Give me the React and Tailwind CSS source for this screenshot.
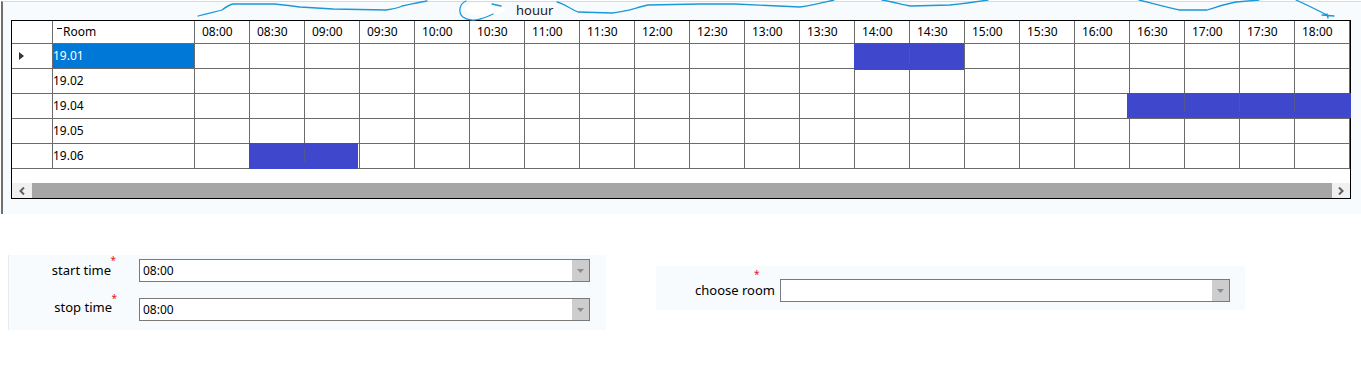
import React from "react";

const times = [
  "08:00","08:30","09:00","09:30","10:00","10:30","11:00","11:30","12:00","12:30",
  "13:00","13:30","14:00","14:30","15:00","15:30","16:00","16:30","17:00","17:30","18:00",
];
const rooms = ["19.01", "19.02", "19.04", "19.05", "19.06"];

function Combo({ value, className }) {
  return (
    <div className={"flex h-[23px] border border-[#7a7a7a] bg-white " + className}>
      <div className="flex flex-1 items-center pl-[3px] text-[12px] leading-none text-black">{value}</div>
      <div className="flex w-[17px] items-center justify-center bg-[#cdcdcd]">
        <svg width="7" height="4" viewBox="0 0 7 4">
          <polygon points="0,0 7,0 3.5,4" fill="#8c8c8c" />
        </svg>
      </div>
    </div>
  );
}

function Label({ text, starTop }) {
  return (
    <span className="relative text-[13px] leading-none text-black">
      {text}
      <span className={"absolute right-[-5px] text-[10px] leading-none text-[#e81123] " + starTop}>*</span>
    </span>
  );
}

export default function App() {
  return (
    <div className="relative h-[387px] w-[1361px] overflow-hidden bg-white font-['Noto_Sans',sans-serif]">
      {/* top panel */}
      <div className="ml-px mt-px h-[213px] border-l-2 border-t border-[#6f6f6f] border-t-[#d5dbe1] bg-[#f7fbfe] pl-[8px] pt-[18px]">
        <div className="relative w-[1340px] border border-black bg-white">
          <div className="grid grid-cols-[41px_142px_repeat(21,55px)] text-[12px] leading-none text-black">
            {/* header */}
            <div className="h-[23px] border-b border-r border-[#6b6b6b]" />
            <div className="flex h-[23px] items-center border-b border-r border-[#6b6b6b] pl-[4px]">
              <span className="mb-[7px] mr-[1px] inline-block h-px w-[5px] bg-black" />
              Room
            </div>
            {times.map((t) => (
              <div key={t} className="flex h-[23px] items-center border-b border-r border-[#6b6b6b] pl-[7px]">
                {t}
              </div>
            ))}
            {rooms.map((r, i) => (
              <React.Fragment key={r}>
                <div className="flex h-[25px] items-center border-b border-r border-[#6b6b6b] pl-[7px]">
                  {i === 0 && (
                    <svg width="5" height="8" viewBox="0 0 5 8">
                      <polygon points="0,0 5,4 0,8" fill="#333" />
                    </svg>
                  )}
                </div>
                <div
                  className={
                    "flex h-[25px] items-center border-b border-r border-[#6b6b6b] " +
                    (i === 0 ? "bg-[#0078d7] text-white" : "")
                  }
                >
                  {r}
                </div>
                {times.map((t) => (
                  <div key={t} className="h-[25px] border-b border-r border-[#6b6b6b]" />
                ))}
              </React.Fragment>
            ))}
          </div>
          {/* scrollbar */}
          <div className="mt-[14px] flex h-[15px]">
            <div className="flex w-[20px] items-center justify-center bg-[#f0f0f0]">
              <svg width="6" height="8" viewBox="0 0 6 8">
                <polyline points="5,0.5 1.5,4 5,7.5" fill="none" stroke="#606060" strokeWidth="2" />
              </svg>
            </div>
            <div className="flex-1 bg-[#a6a6a6]" />
            <div className="flex w-[18px] items-center justify-center bg-[#f0f0f0]">
              <svg width="6" height="8" viewBox="0 0 6 8">
                <polyline points="1,0.5 4.5,4 1,7.5" fill="none" stroke="#606060" strokeWidth="2" />
              </svg>
            </div>
          </div>
          {/* painted blocks */}
          <div className="absolute left-[842px] top-[22px] h-[27px] w-[110px] bg-[#3f48cc]" />
          <div className="absolute left-[897px] top-[27px] h-[16px] w-px bg-[#55558f]" />
          <div className="absolute left-[1115px] top-[72px] h-[25px] w-[224px] bg-[#3f48cc]" />
          <div className="absolute left-[1172px] top-[72px] h-[19px] w-px bg-[#55558f]" />
          <div className="absolute left-[1227px] top-[72px] h-[19px] w-px bg-[#55558f]" />
          <div className="absolute left-[1282px] top-[72px] h-[19px] w-px bg-[#55558f]" />
          <div className="absolute left-[237px] top-[122px] h-[26px] w-[109px] bg-[#3f48cc]" />
          <div className="absolute left-[292px] top-[127px] h-[14px] w-px bg-[#55558f]" />
        </div>
      </div>

      {/* forms */}
      <div className="flex items-start">
        <div className="ml-[8px] mt-[41px] h-[75px] w-[598px] border-l border-[#e6ebf0] bg-[#f7fbfe]">
          <div className="mt-[4px] flex items-center">
            <div className="flex w-[102px] justify-end pb-[1px]">
              <Label text="start time" starTop="top-[-9px]" />
            </div>
            <Combo value="08:00" className="ml-[28px] w-[451px]" />
          </div>
          <div className="mt-[16px] flex items-start">
            <div className="flex w-[103px] justify-end pt-[3px]">
              <Label text="stop time" starTop="top-[-8px]" />
            </div>
            <Combo value="08:00" className="ml-[27px] w-[451px]" />
          </div>
        </div>
        <div className="ml-[50px] mt-[52px] flex h-[44px] w-[589px] items-start bg-[#f7fbfe] pt-[13px]">
          <div className="flex w-[119px] justify-end pt-[5px]">
            <span className="relative text-[13px] leading-none text-black">
              choose room
              <span className="absolute left-[59px] top-[-15px] text-[10px] leading-none text-[#e81123]">*</span>
            </span>
          </div>
          <Combo value="" className="ml-[5px] w-[450px]" />
        </div>
      </div>

      {/* annotation over the top */}
      <svg className="absolute left-0 top-0" width="1361" height="24" viewBox="0 0 1361 24">
        <ellipse cx="485" cy="9" rx="20" ry="7" fill="#ffffff" />
        <g fill="none" stroke="#1c98d6" strokeWidth="1.3" strokeLinecap="round">
          <path d="M198,16 C208,13 215,12 222,10 C226,7 229,5 233,4 L275,4 C285,5 292,6 300,7 L333,9 L386,10 C393,9 398,8 402,6 C412,4 420,2 427,1" />
          <path d="M466,1 C459,4 458,13 463,17 C467,20 474,21 480,19 C485,18 489,16 493,14" />
          <path d="M492,4 L501,6" />
          <path d="M557,2 C565,4 570,9 578,12 L612,13 C625,12 635,8 648,5 L700,4 L735,4 C760,5 780,6 800,7 C815,5 825,2 834,0" />
          <path d="M882,0 C895,2 903,5 911,6 L950,5 C960,4 975,2 988,0" />
          <path d="M1139,0 C1155,4 1170,8 1180,10 L1207,10 C1217,7 1225,4 1236,2 L1259,0" />
          <path d="M1296,0 C1307,5 1317,10 1327,15 M1322,15 L1334,16 M1327,14 L1328,18" />
        </g>
      </svg>
      <span className="absolute left-[516px] top-[4px] text-[13px] leading-[13px] text-[#1a1a1a]">houur</span>
    </div>
  );
}
